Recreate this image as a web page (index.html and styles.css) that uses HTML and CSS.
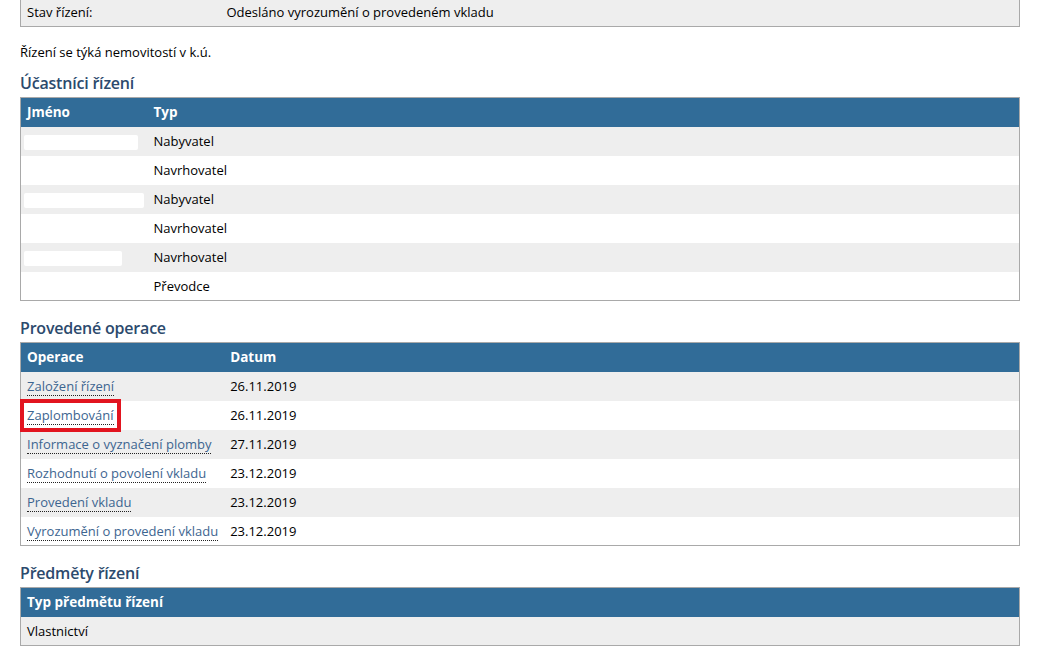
FILE: index.html
```html
<!DOCTYPE html>
<html lang="cs">
<head>
  <meta charset="UTF-8">
  <title>Detail řízení</title>
  <link rel="stylesheet" href="styles.css">
</head>
<body>

  <div class="page">

    <table class="grid grid-info">
      <tr>
        <td class="col-label">Stav řízení:</td>
        <td>Odesláno vyrozumění o provedeném vkladu</td>
      </tr>
    </table>

    <p class="note">Řízení se týká nemovitostí v k.ú.</p>

    <h2 class="section-title">Účastníci řízení</h2>
    <table class="grid">
      <thead>
        <tr>
          <th class="col-name">Jméno</th>
          <th>Typ</th>
        </tr>
      </thead>
      <tbody>
        <tr>
          <td><span class="redacted" style="width: 114px"></span></td>
          <td>Nabyvatel</td>
        </tr>
        <tr>
          <td></td>
          <td>Navrhovatel</td>
        </tr>
        <tr>
          <td><span class="redacted" style="width: 120px"></span></td>
          <td>Nabyvatel</td>
        </tr>
        <tr>
          <td></td>
          <td>Navrhovatel</td>
        </tr>
        <tr>
          <td><span class="redacted" style="width: 98px"></span></td>
          <td>Navrhovatel</td>
        </tr>
        <tr>
          <td></td>
          <td>Převodce</td>
        </tr>
      </tbody>
    </table>

    <h2 class="section-title">Provedené operace</h2>
    <table class="grid">
      <thead>
        <tr>
          <th class="col-operation">Operace</th>
          <th>Datum</th>
        </tr>
      </thead>
      <tbody>
        <tr>
          <td><a href="#">Založení řízení</a></td>
          <td>26.11.2019</td>
        </tr>
        <tr>
          <td><a href="#" class="highlight">Zaplombování</a></td>
          <td>26.11.2019</td>
        </tr>
        <tr>
          <td><a href="#">Informace o vyznačení plomby</a></td>
          <td>27.11.2019</td>
        </tr>
        <tr>
          <td><a href="#">Rozhodnutí o povolení vkladu</a></td>
          <td>23.12.2019</td>
        </tr>
        <tr>
          <td><a href="#">Provedení vkladu</a></td>
          <td>23.12.2019</td>
        </tr>
        <tr>
          <td><a href="#">Vyrozumění o provedení vkladu</a></td>
          <td>23.12.2019</td>
        </tr>
      </tbody>
    </table>

    <h2 class="section-title">Předměty řízení</h2>
    <table class="grid">
      <thead>
        <tr>
          <th>Typ předmětu řízení</th>
        </tr>
      </thead>
      <tbody>
        <tr>
          <td>Vlastnictví</td>
        </tr>
      </tbody>
    </table>

  </div>

</body>
</html>
```

FILE: styles.css
```css
body {
  margin: 0;
  background: #fff;
  color: #000;
  font-family: "Open Sans", "Liberation Sans", sans-serif;
  font-size: 13px;
}

.page {
  margin: -3px 25px 0 20px;
}

.grid {
  width: 100%;
  border-collapse: collapse;
  border: 1px solid #a9a9a9;
}

.grid th,
.grid td {
  height: 29px;
  padding: 0 6px;
  text-align: left;
  vertical-align: middle;
  white-space: nowrap;
  box-sizing: border-box;
}

.grid th {
  background-color: #316c98;
  color: #fff;
  font-weight: 700;
  font-size: 13.5px;
}

.grid tbody tr:nth-child(odd) td {
  background-color: #eeeeee;
}

.grid-info td {
  background-color: #fff;
}

.col-label {
  width: 200px;
}

.col-name {
  width: 127px;
}

.col-operation {
  width: 203px;
}

.note {
  margin: 15px 0 0;
  line-height: 20px;
}

.section-title {
  margin: 17px 0 4px;
  color: #2c4a6d;
  font-size: 16px;
  font-weight: 600;
  line-height: 20px;
  letter-spacing: -0.2px;
}

.note + .section-title {
  margin-top: 11px;
}

.grid a {
  color: #3d6590;
  text-decoration: none;
  border-bottom: 1px dotted #222;
}

.highlight {
  outline: 4px solid #e2141f;
  outline-offset: 3px;
}

.redacted {
  display: inline-block;
  height: 15px;
  vertical-align: middle;
  background: #fff;
  margin: 0 -40px 0 -3px;
  border-radius: 2px;
}
```
